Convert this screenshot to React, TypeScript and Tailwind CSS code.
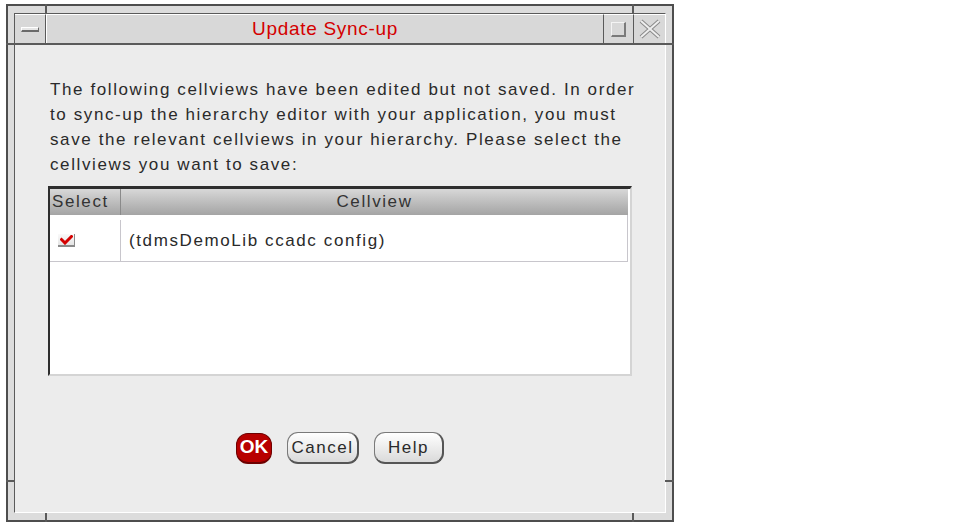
import React from 'react';

const font = { fontFamily: '"Liberation Sans", Arial, sans-serif' };

// small red tick used in the Select column
const CheckMark: React.FC = () => (
  <div className="w-[17px] h-[13px] bg-gradient-to-b from-[#fafafa] to-[#e4e4e4] border-b-2 border-r border-[#8a8a8a] flex items-center justify-center">
    <svg width="13" height="10" viewBox="0 0 13 10">
      <path d="M1.5 4.5 L5 8 L11.5 1.5" stroke="#d40000" strokeWidth="3" fill="none" strokeLinecap="square" />
    </svg>
  </div>
);

const PlainButton: React.FC<{ label: string; width: string }> = ({ label, width }) => (
  <button
    className={`${width} h-[32px] rounded-[11px] border border-[#7a7a7a] border-r-2 border-b-2 border-r-[#555] border-b-[#555] bg-gradient-to-b from-white to-[#dadada] text-[17px] tracking-[1.5px] text-[#2a2a2a] flex items-center justify-center`}
  >
    {label}
  </button>
);

export default function App() {
  return (
    <div className="min-h-screen bg-white pt-[4px] pl-[6px]" style={font}>
      {/* window frame */}
      <div className="relative w-[668px] h-[518px] border-2 border-[#4e4e4e] bg-[#dcdcdc] px-[6px] pt-[7px] pb-[7px] flex">
        {/* resize corner ticks */}
        <div className="absolute left-[37px] top-[-2px] w-[2px] h-[9px] bg-[#5a5a5a]" />
        <div className="absolute right-[38px] top-[-2px] w-[2px] h-[9px] bg-[#5a5a5a]" />
        <div className="absolute left-[37px] bottom-[-2px] w-[2px] h-[9px] bg-[#5a5a5a]" />
        <div className="absolute right-[38px] bottom-[-2px] w-[2px] h-[9px] bg-[#5a5a5a]" />
        <div className="absolute left-[-2px] top-[37px] w-[9px] h-[2px] bg-[#5a5a5a]" />
        <div className="absolute right-[-2px] top-[37px] w-[9px] h-[2px] bg-[#5a5a5a]" />
        <div className="absolute left-[-2px] bottom-[38px] w-[9px] h-[2px] bg-[#5a5a5a]" />
        <div className="absolute right-[-2px] bottom-[38px] w-[9px] h-[2px] bg-[#5a5a5a]" />

        <div className="flex-1 flex flex-col border border-t-[#5a5a5a] border-l-[#5a5a5a] border-r-white border-b-white">
          {/* title bar */}
          <div className="h-[31px] flex border-b-2 border-[#5a5a5a] bg-[#d8d8d8]">
            <div className="w-[31px] border-r border-[#5a5a5a] border-t border-t-white flex items-center justify-center">
              <div className="w-[18px] h-[5px] bg-[#e6e6e6] border border-t-white border-l-white border-r-[#6a6a6a] border-b-[#6a6a6a] border-b-2" />
            </div>
            <div className="flex-1 border-t border-l border-white flex items-center justify-center">
              <span className="text-[19px] tracking-[0.7px] text-[#d40000]">Update Sync-up</span>
            </div>
            <div className="w-[30px] border-l border-[#5a5a5a] border-t border-t-white flex items-center justify-center">
              <div className="w-[15px] h-[15px] border border-t-[#f4f4f4] border-l-[#f4f4f4] border-r-[#7a7a7a] border-b-[#7a7a7a] border-r-2 border-b-2" />
            </div>
            <div className="w-[32px] border-l border-[#5a5a5a] border-t border-t-white flex items-center justify-center">
              <svg width="22" height="20" viewBox="0 0 22 20">
                <path d="M2 2 L20 18 M20 2 L2 18" stroke="#8a8a8a" strokeWidth="4" fill="none" />
                <path d="M2 2 L20 18 M20 2 L2 18" stroke="#eeeeee" strokeWidth="2" fill="none" />
              </svg>
            </div>
          </div>

          {/* dialog body */}
          <div className="flex-1 bg-[#ececec] flex flex-col">
            <p className="pl-[35px] pt-[32px] text-[17px] leading-[25px] tracking-[1.6px] text-[#2a2a2a] whitespace-nowrap">
              The following cellviews have been edited but not saved. In order
              <br />
              to sync-up the hierarchy editor with your application, you must
              <br />
              save the relevant cellviews in your hierarchy. Please select the
              <br />
              cellviews you want to save:
            </p>

            {/* cellview table */}
            <div className="ml-[33px] mt-[9px] w-[584px] h-[190px] border-t-[3px] border-l-2 border-[#2e2e2e] border-r-2 border-b-2 border-r-[#d4d4d4] border-b-[#d4d4d4] bg-white pr-[2px] flex flex-col">
              <div className="h-[26px] flex bg-gradient-to-b from-[#d8d8d8] to-[#a4a4a4] text-[17px] tracking-[1.6px] text-[#333]">
                <div className="w-[71px] border-r border-[#8a8a8a] pl-[2px] overflow-hidden whitespace-nowrap flex items-center">
                  Select
                </div>
                <div className="flex-1 flex items-center justify-center">Cellview</div>
              </div>
              <div className="h-[47px] pt-[5px] flex border-b border-r border-[#c8c6cc] text-[17px] tracking-[1.6px] text-[#2a2a2a]">
                <div className="w-[71px] border-r border-[#c8c6cc] pl-[8px] flex items-center">
                  <CheckMark />
                </div>
                <div className="flex-1 pl-[8px] flex items-center">(tdmsDemoLib ccadc config)</div>
              </div>
            </div>

            {/* buttons */}
            <div className="mt-[56px] flex justify-center items-center gap-[15px]">
              <button className="w-[36px] h-[31px] rounded-[12px] bg-[#b80000] border border-[#6e0000] border-b-2 text-white font-bold text-[19px] flex items-center justify-center">
                OK
              </button>
              <PlainButton label="Cancel" width="w-[72px]" />
              <PlainButton label="Help" width="w-[70px]" />
            </div>
          </div>
        </div>
      </div>
    </div>
  );
}
